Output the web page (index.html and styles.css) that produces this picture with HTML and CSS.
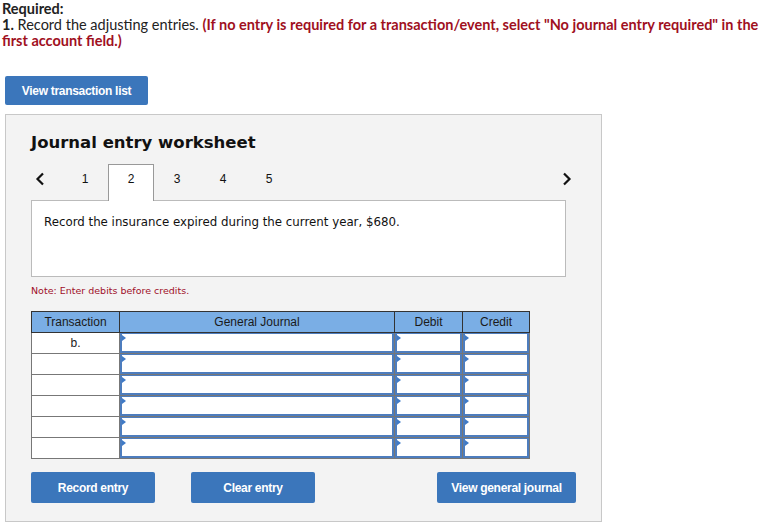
FILE: index.html
```html
<!DOCTYPE html>
<html>
<head>
<link rel="stylesheet" href="styles.css">
</head>
<body>
<div class="required">
  <b>Required:</b><br>
  <b>1.</b> Record the adjusting entries. <span class="warn">(If no entry is required for a transaction/event, select "No journal entry required" in the first account field.)</span>
</div>

<button class="btn btn-list">View transaction list</button>

<div class="panel">
  <h1>Journal entry worksheet</h1>

  <div class="tabs">
    <span class="nav prev"><svg width="10" height="14" viewBox="0 0 10 14"><path d="M8 1.5 L2.5 7 L8 12.5" fill="none" stroke="#111" stroke-width="2.2"/></svg></span>
    <span class="tab">1</span>
    <span class="tab active">2</span>
    <span class="tab">3</span>
    <span class="tab">4</span>
    <span class="tab">5</span>
    <span class="spacer"></span>
    <span class="nav next"><svg width="10" height="14" viewBox="0 0 10 14"><path d="M2 1.5 L7.5 7 L2 12.5" fill="none" stroke="#111" stroke-width="2.2"/></svg></span>
  </div>

  <div class="question">Record the insurance expired during the current year, $680.</div>

  <p class="note">Note: Enter debits before credits.</p>

  <table class="journal">
    <tr>
      <th class="c-tr">Transaction</th>
      <th class="c-gj">General Journal</th>
      <th class="c-dr">Debit</th>
      <th class="c-cr">Credit</th>
    </tr>
    <tr><td class="trx">b.</td><td class="in"><div></div></td><td class="in"><div></div></td><td class="in"><div></div></td></tr>
    <tr><td class="trx"></td><td class="in"><div></div></td><td class="in"><div></div></td><td class="in"><div></div></td></tr>
    <tr><td class="trx"></td><td class="in"><div></div></td><td class="in"><div></div></td><td class="in"><div></div></td></tr>
    <tr><td class="trx"></td><td class="in"><div></div></td><td class="in"><div></div></td><td class="in"><div></div></td></tr>
    <tr><td class="trx"></td><td class="in"><div></div></td><td class="in"><div></div></td><td class="in"><div></div></td></tr>
    <tr><td class="trx"></td><td class="in"><div></div></td><td class="in"><div></div></td><td class="in"><div></div></td></tr>
  </table>

  <div class="actions">
    <button class="btn btn-record">Record entry</button>
    <button class="btn btn-clear">Clear entry</button>
    <span class="spacer"></span>
    <button class="btn btn-view">View general journal</button>
  </div>
</div>
</body>
</html>
```
FILE: styles.css
```css
body {
  margin: 0;
  padding: 1px 2px;
  background: #fff;
  color: #222;
}

.required {
  font-family: Lato, "Liberation Sans", sans-serif;
  font-size: 14.5px;
  line-height: 16px;
  color: #222;
  width: 764px;
}
.warn { color: #a0101e; font-weight: bold; }

.btn {
  background-color: #3b76bb;
  color: #fff;
  border: none;
  border-radius: 2px;
  font-family: "Liberation Sans", Arial, sans-serif;
  font-size: 12px;
  font-weight: bold;
  letter-spacing: -0.3px;
  height: 30px;
  padding: 0;
  cursor: pointer;
}
.btn-list { display: block; margin: 27px 0 0 3px; width: 143px; height: 29px; }

.panel {
  margin: 9px 0 0 3px;
  height: 406px;
  border: 1px solid #c8c8c8;
  background-color: #f3f3f3;
  padding: 0 0 0 25px;
  box-sizing: content-box;
  width: 570px;
}

h1 {
  font-family: "DejaVu Sans", Verdana, sans-serif;
  font-size: 16.5px;
  font-weight: bold;
  color: #111;
  margin: 18px 0 0 0;
  line-height: 20px;
}

.tabs {
  display: flex;
  align-items: flex-start;
  height: 37px;
  margin-top: 11px;
  width: 545px;
  position: relative;
  z-index: 1;
  margin-bottom: -1px;
}
.nav { width: 31px; height: 29px; display: flex; align-items: center; padding-left: 4px; box-sizing: border-box; }
.next { width: 14px; padding-left: 0; }
.tab {
  width: 46px;
  height: 37px;
  text-align: center;
  font-family: "Liberation Sans", Arial, sans-serif;
  font-size: 12px;
  line-height: 28px;
  color: #111;
  box-sizing: border-box;
  border: 1px solid transparent;
  border-bottom: none;
}
.tab.active {
  background: #fff;
  border-color: #999;
}
.spacer { flex: 1; }

.question {
  background: #fff;
  border: 1px solid #bbb;
  font-family: "DejaVu Sans", Verdana, sans-serif;
  font-size: 11.8px;
  color: #111;
  padding: 14px 0 0 12px;
  box-sizing: border-box;
  width: 535px;
  height: 77px;
}

.note {
  font-family: "DejaVu Sans", Verdana, sans-serif;
  font-size: 9.5px;
  color: #a0102a;
  margin: 8px 0 0 0;
  line-height: 12px;
}

.journal {
  border-collapse: collapse;
  margin-top: 14px;
  font-family: "Liberation Sans", Arial, sans-serif;
  font-size: 12px;
}
.journal th {
  background-color: #7aaee5;
  border: 1px solid #333;
  font-weight: normal;
  color: #1a1a1a;
  height: 20px;
  padding: 0;
}
.c-tr { width: 87px; }
.c-gj { width: 274px; }
.c-dr { width: 67px; }
.c-cr { width: 66px; }
.journal td {
  border: 1px solid #777;
  background: #fff;
  height: 20px;
  padding: 0;
}
.journal td.trx { text-align: center; vertical-align: top; padding-top: 3px; height: 17px; }
.journal td.in div {
  height: 20px;
  border: 2px solid #4d7dbe;
  border-top-width: 1px;
  box-sizing: border-box;
  position: relative;
}
.journal td.in div::before {
  content: "";
  position: absolute;
  left: 0;
  top: 1px;
  border-left: 4px solid #3f7ac6;
  border-top: 3px solid transparent;
  border-bottom: 3px solid transparent;
}

.actions {
  display: flex;
  width: 545px;
  margin-top: 13px;
}
.btn-record { width: 124px; height: 31px; }
.btn-clear { width: 124px; height: 31px; margin-left: 36px; }
.btn-view { width: 139px; height: 31px; }
```
